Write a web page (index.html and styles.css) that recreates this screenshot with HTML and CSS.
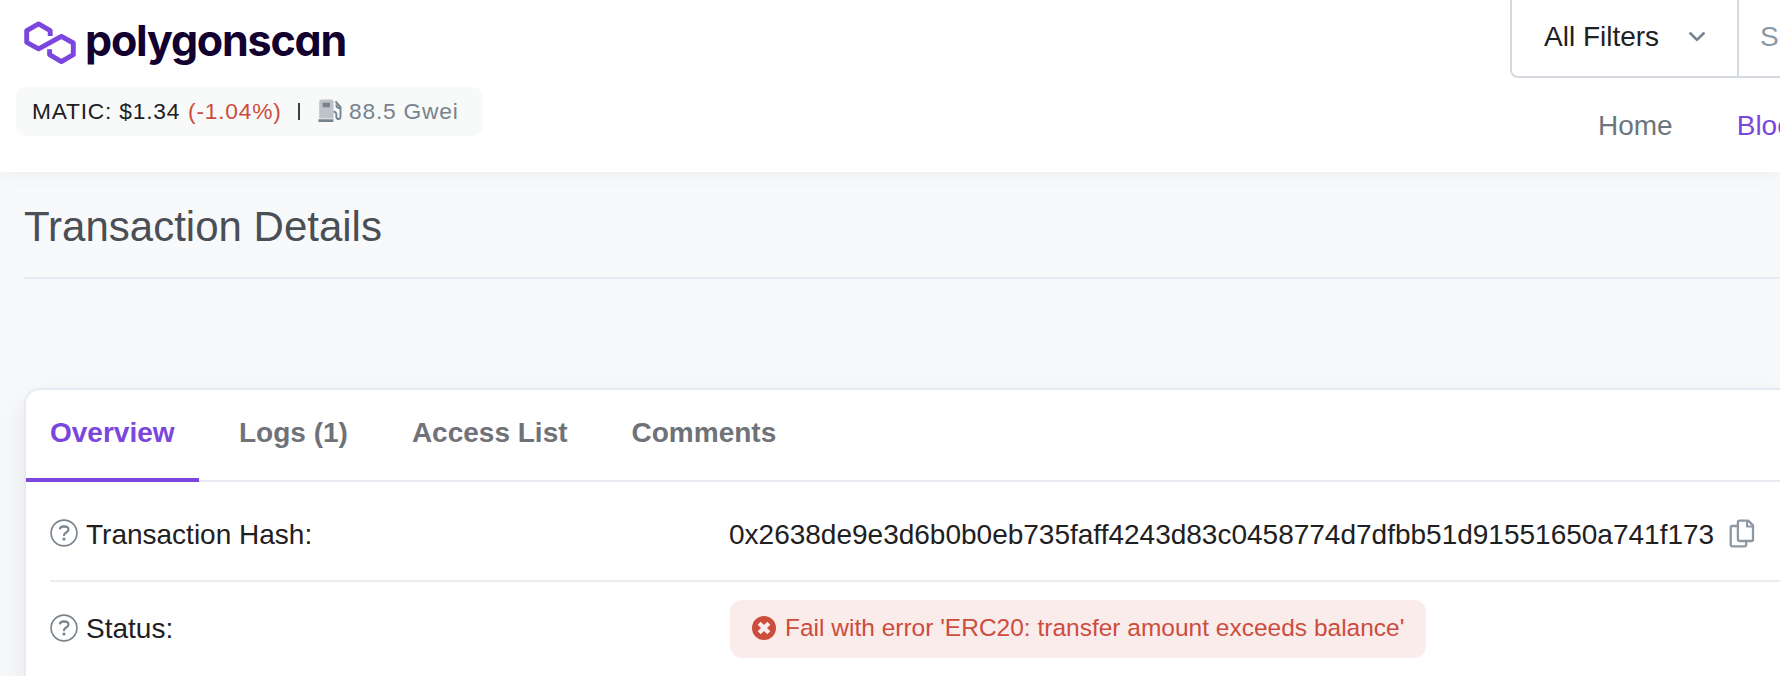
FILE: index.html
```html
<!DOCTYPE html>
<html lang="en">
<head>
<meta charset="utf-8">
<title>Transaction Details</title>
<link rel="stylesheet" href="styles.css">
</head>
<body>
<header class="header">
  <div class="brand">
    <a class="logo">
      <svg class="logo-mark" width="52" height="44" viewBox="0 0 52 44" fill="none" stroke="#7b46dd" stroke-width="4.900" stroke-linejoin="round"><path d="M26.200 15V9.600L14.600 2.900L2.700 9.600V21.300L14.600 27.800L37.400 15.300L49.300 22V33.700L37.400 40.600L25.600 33.700V28.200"/></svg>
      <span class="logo-text">polygonscan</span>
    </a>
    <div class="ticker">
      <span class="price">MATIC: $1.34</span>
      <span class="change">(-1.04%)</span>
      <span class="bar"></span>
      <svg class="gas" width="24" height="24" viewBox="0 0 24 24"><path fill="#bdc3ca" fill-rule="evenodd" d="M3.500.5h10Q15.600.5 15.600 2.800V19.500H1.200V2.800Q1.200.5 3.500.5zM4.600 3.600V8.600H12V3.600z"/><path fill="#77838f" d="M4.600 3.600H12V8.600H4.600zM.4 20.200H15.400V23H.4z"/><path fill="none" stroke="#77838f" stroke-width="1.900" d="M15.500 12.600Q18.600 12.600 18.400 16.500V18Q18.700 20 20.500 20T22.500 18V8L17.500 2.500M18.300 5.500Q18.300 9.300 22.500 9.300"/></svg>
      <span class="gwei">88.5 Gwei</span>
    </div>
  </div>
  <div class="tools">
    <div class="search">
      <div class="filters"><span>All Filters</span>
        <svg width="18" height="12" viewBox="0 0 18 12" fill="none" stroke="#77838f" stroke-width="2.600" stroke-linecap="round" stroke-linejoin="round"><path d="M2.300 2.300L9 8.900L15.700 2.300"/></svg>
      </div>
      <div class="query">Search</div>
    </div>
    <nav class="nav"><a>Home</a><a class="active">Blockchain</a></nav>
  </div>
</header>
<main class="main">
  <h1 class="title">Transaction Details</h1>
  <section class="card">
    <div class="tabs">
      <a class="tab active">Overview</a><a class="tab">Logs (1)</a><a class="tab">Access List</a><a class="tab">Comments</a>
    </div>
    <div class="rows">
      <div class="row hash-row">
        <div class="label">
          <svg class="help" width="28" height="28" viewBox="0 0 28 28" fill="none" stroke="#77838f"><circle cx="14" cy="14" r="12.900" stroke-width="1.600"/><path stroke-width="2.100" stroke-linecap="round" d="M10 9.500Q10.800 7.500 13.700 7.400Q18.500 7.400 18.500 10.600C18.500 13.500 14 13.500 14 16.200"/><circle cx="14" cy="20" r="1.600" fill="#77838f" stroke="none"/></svg>
          <span>Transaction Hash:</span>
        </div>
        <div class="value">
          <span>0x2638de9e3d6b0b0eb735faff4243d83c0458774d7dfbb51d91551650a741f173</span>
          <svg width="26" height="30" viewBox="0 0 26 30" fill="none" stroke="#8c98a4" stroke-width="2.300" stroke-linejoin="round"><path d="M8 7H3.300Q1.700 7 1.700 8.600V25.600Q1.700 27.300 3.300 27.300H15.500Q17.200 27.300 17.200 25.600V22.700"/><path d="M10.500 1.600H19.200L24 6.400V20.400Q24 22 22.400 22H10.500Q8.900 22 8.900 20.400V3.200Q8.900 1.600 10.500 1.600z"/><path stroke-width="2" d="M18 2V7.500H24"/></svg>
        </div>
      </div>
      <div class="row status-row">
        <div class="label">
          <svg class="help" width="28" height="28" viewBox="0 0 28 28" fill="none" stroke="#77838f"><circle cx="14" cy="14" r="12.900" stroke-width="1.600"/><path stroke-width="2.100" stroke-linecap="round" d="M10 9.500Q10.800 7.500 13.700 7.400Q18.500 7.400 18.500 10.600C18.500 13.500 14 13.500 14 16.200"/><circle cx="14" cy="20" r="1.600" fill="#77838f" stroke="none"/></svg>
          <span>Status:</span>
        </div>
        <div class="error">
          <svg width="24" height="24" viewBox="0 0 24 24"><circle cx="12" cy="12" r="12" fill="#cc4d3d"/><path d="M7.200 7.200L16.800 16.800M16.800 7.200L7.200 16.800" stroke="#fbecec" stroke-width="4.200"/></svg>
          <span>Fail with error 'ERC20: transfer amount exceeds balance'</span>
        </div>
      </div>
    </div>
  </section>
</main>
</body>
</html>
```
FILE: styles.css
```css
* { box-sizing: border-box; }
body {
  display: flex;
  flex-direction: column;
  margin: 0;
  height: 676px;
  overflow: hidden;
  background: #f8f9fb;
  color: #1e2022;
  font: 28px/42px "Liberation Sans", Arial, sans-serif;
  white-space: nowrap;
}
svg { display: block; flex: none; }
.header {
  position: relative;
  display: flex;
  flex: none;
  justify-content: space-between;
  height: 172px;
  background: #fff;
  box-shadow: 0 0 18px rgba(80, 90, 100, .09);
}
.brand { padding-left: 16px; }
.logo { display: flex; height: 87px; padding: 21px 0 0 8px; }
.logo-text {
  margin: -4px 0 0 9px;
  color: #12002f;
  font: 700 43px/46px Inter, sans-serif;
  font-feature-settings: "cv11";
  letter-spacing: -1.2px;
}
.ticker {
  display: flex;
  align-items: center;
  width: 467px;
  height: 49px;
  padding: 0 0 1px 16px;
  border-radius: 11px;
  background: #f8f9f9;
  font-size: 22.75px;
  letter-spacing: .8px;
}
.price { width: 156px; }
.change { width: 110px; color: #cc4d3d; }
.bar { width: 2px; height: 17px; background: #3c3e40; }
.gas { margin: 0 7px 0 18px; }
.gwei { color: #77838f; }
.tools { width: 270px; }
.search {
  display: flex;
  height: 78px;
  border: 2px solid #d5dae2;
  border-width: 0 0 2px 2px;
  border-radius: 0 0 0 8px;
}
.filters {
  display: flex;
  align-items: center;
  justify-content: space-between;
  width: 227px;
  padding: 0 31px 3px 32px;
  border-right: 2px solid #d5dae2;
}
.query { width: 41px; padding: 16px 0 0 21px; overflow: hidden; color: #8c98a4; }
.nav { display: flex; gap: 64px; overflow: hidden; padding: 27px 0 0 88px; color: #6c757d; }
.active { color: #7b46dd; }
.main {
  display: flex;
  flex: 1;
  flex-direction: column;
  min-height: 0;
  padding-left: 24px;
}
.title {
  flex: none;
  margin: 0 0 109px;
  height: 107px;
  padding-top: 26px;
  border-bottom: 2px solid #e7eaf3;
  color: #4a4f55;
  font-size: 42px;
  font-weight: 400;
  line-height: 58px;
}
.card {
  flex: 1;
  border: 2px solid #e7eaf3;
  border-width: 2px 0 0 2px;
  border-radius: 16px 0 0 0;
  background: #fff;
  box-shadow: 0 12px 30px rgba(80, 90, 100, .12);
}
.tabs {
  display: flex;
  height: 92px;
  border-bottom: 2px solid #e7eaf3;
  color: #6f7278;
  font-weight: 700;
}
.tab { height: 92px; margin-right: 16px; padding: 22px 24px 0; }
.tab.active { width: 173px; border-bottom: 4px solid #7b46dd; }
.rows { padding-left: 24px; }
.row { display: flex; align-items: center; }
.hash-row { height: 100px; padding-top: 7px; border-bottom: 2px solid #eaedf2; }
.status-row { height: 94px; }
.label { display: flex; align-items: center; gap: 8px; width: 680px; }
.help { margin-top: -3px; }
.value { display: flex; align-items: center; gap: 15px; margin-left: -1px; }
.value svg { margin-top: -2px; }
.error {
  display: flex;
  align-items: center;
  gap: 9px;
  width: 696px;
  height: 58px;
  padding: 0 0 2px 22px;
  border-radius: 12px;
  background: #fbecec;
  color: #cc4d3d;
  font-size: 24.5px;
}
```
